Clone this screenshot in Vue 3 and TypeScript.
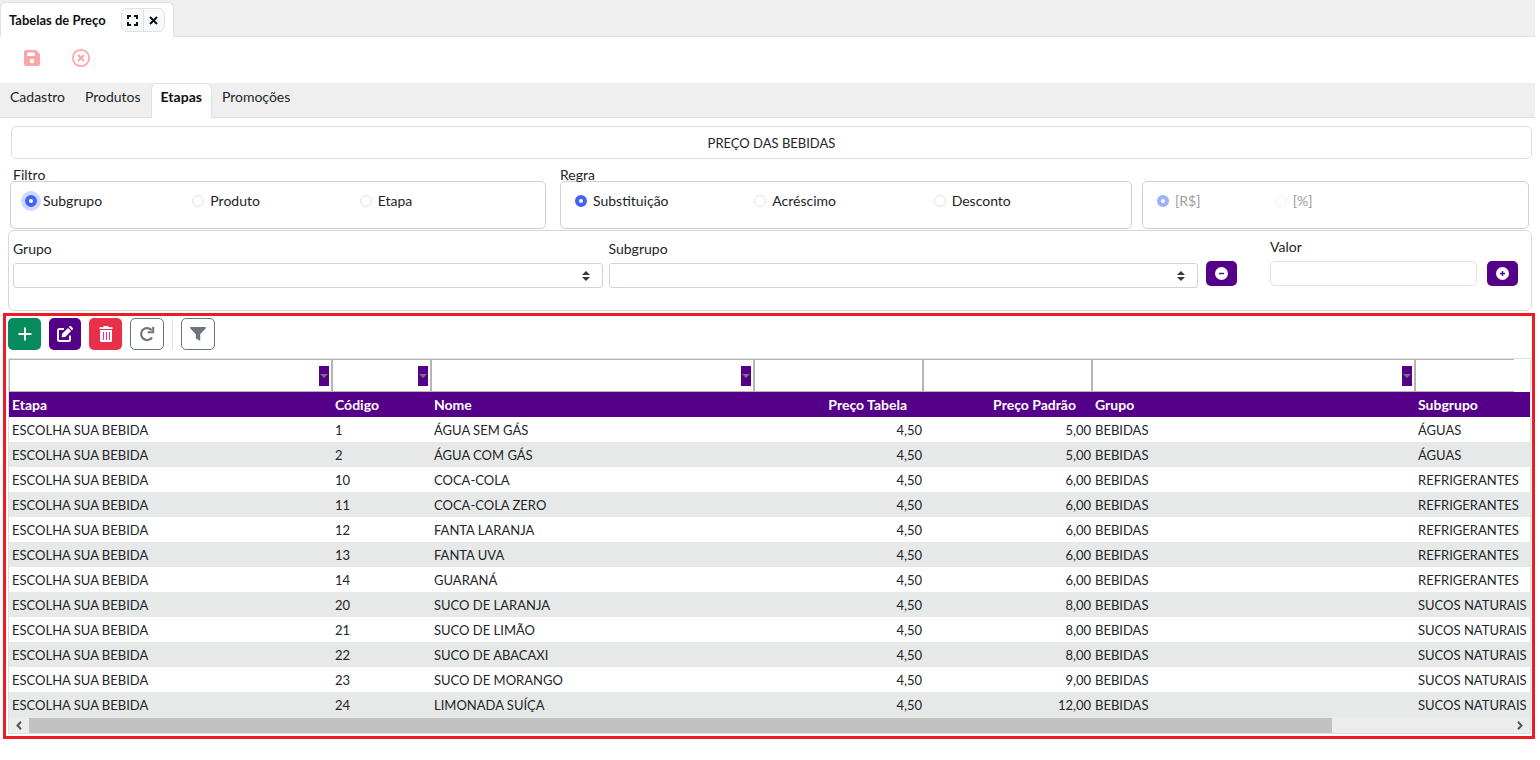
<script setup lang="ts">
import { ref } from 'vue'

interface Row {
  code: number
  name: string
  standard: string
  subgroup: string
}

interface Column {
  key: string
  label: string
  numeric?: boolean
  menu?: boolean
}

const tabs = ['Cadastro', 'Produtos', 'Etapas', 'Promoções']
const activeTab = ref('Etapas')
const title = ref('PREÇO DAS BEBIDAS')
const filterOptions = ['Subgrupo', 'Produto', 'Etapa']
const ruleOptions = ['Substituição', 'Acréscimo', 'Desconto']
const unitOptions = ['[R$]', '[%]']
const filter = ref('Subgrupo')
const rule = ref('Substituição')
const unit = ref('[R$]')
const value = ref('')

const columns: Column[] = [
  { key: 'stage', label: 'Etapa', menu: true },
  { key: 'code', label: 'Código', menu: true },
  { key: 'name', label: 'Nome', menu: true },
  { key: 'price', label: 'Preço Tabela', numeric: true },
  { key: 'standard', label: 'Preço Padrão', numeric: true },
  { key: 'group', label: 'Grupo', menu: true },
  { key: 'subgroup', label: 'Subgrupo' },
]

const rows: Row[] = [
  { code: 1, name: 'ÁGUA SEM GÁS', standard: '5,00', subgroup: 'ÁGUAS' },
  { code: 2, name: 'ÁGUA COM GÁS', standard: '5,00', subgroup: 'ÁGUAS' },
  { code: 10, name: 'COCA-COLA', standard: '6,00', subgroup: 'REFRIGERANTES' },
  { code: 11, name: 'COCA-COLA ZERO', standard: '6,00', subgroup: 'REFRIGERANTES' },
  { code: 12, name: 'FANTA LARANJA', standard: '6,00', subgroup: 'REFRIGERANTES' },
  { code: 13, name: 'FANTA UVA', standard: '6,00', subgroup: 'REFRIGERANTES' },
  { code: 14, name: 'GUARANÁ', standard: '6,00', subgroup: 'REFRIGERANTES' },
  { code: 20, name: 'SUCO DE LARANJA', standard: '8,00', subgroup: 'SUCOS NATURAIS' },
  { code: 21, name: 'SUCO DE LIMÃO', standard: '8,00', subgroup: 'SUCOS NATURAIS' },
  { code: 22, name: 'SUCO DE ABACAXI', standard: '8,00', subgroup: 'SUCOS NATURAIS' },
  { code: 23, name: 'SUCO DE MORANGO', standard: '9,00', subgroup: 'SUCOS NATURAIS' },
  { code: 24, name: 'LIMONADA SUÍÇA', standard: '12,00', subgroup: 'SUCOS NATURAIS' },
]
</script>

<template>
  <div class="page">
    <header class="window-bar">
      <div class="window-tab">
        <span class="window-title">Tabelas de Preço</span>
        <div class="window-actions">
          <button type="button" aria-label="Maximizar">
            <svg width="11" height="11" viewBox="0 0 11 11" fill="none" stroke="#111" stroke-width="2">
              <path d="M1 4V1h3M7 1h3v3M10 7v3H7M4 10H1V7" />
            </svg>
          </button>
          <button type="button" aria-label="Fechar">
            <svg width="9" height="9" viewBox="0 0 9 9" fill="none" stroke="#111" stroke-width="2">
              <path d="M1 1l7 7M8 1l-7 7" />
            </svg>
          </button>
        </div>
      </div>
    </header>

    <div class="record-actions">
      <button type="button" aria-label="Salvar" disabled>
        <svg width="18" height="18" viewBox="0 0 18 18" fill="#ffa5a5" fill-rule="evenodd">
          <path d="M3 1h10l4 4v10a2 2 0 0 1-2 2H3a2 2 0 0 1-2-2V3a2 2 0 0 1 2-2zM4 3.5h8V7H4zM9 9.8a2.3 2.3 0 1 0 0 4.6 2.3 2.3 0 0 0 0-4.6z" />
        </svg>
      </button>
      <button type="button" aria-label="Cancelar" disabled>
        <svg width="20" height="20" viewBox="0 0 20 20" fill="none" stroke="#ffa5a5">
          <circle cx="10" cy="10" r="8.2" stroke-width="1.7" />
          <path d="M7 7l6 6M13 7l-6 6" stroke-width="1.9" />
        </svg>
      </button>
    </div>

    <nav class="tabs">
      <button
        v-for="tab in tabs"
        :key="tab"
        type="button"
        class="tab"
        :class="{ active: tab === activeTab }"
        @click="activeTab = tab"
      >{{ tab }}</button>
    </nav>

    <main>
      <input v-model="title" class="title-box" aria-label="Descrição" readonly />

      <div class="options">
        <fieldset class="option-group first">
          <legend>Filtro</legend>
          <div class="option-box">
            <label v-for="option in filterOptions" :key="option" class="option">
              <input v-model="filter" type="radio" name="filter" :value="option" :class="{ focused: option === filter }" />
              {{ option }}
            </label>
          </div>
        </fieldset>
        <fieldset class="option-group second">
          <legend>Regra</legend>
          <div class="option-box">
            <label v-for="option in ruleOptions" :key="option" class="option">
              <input v-model="rule" type="radio" name="rule" :value="option" />
              {{ option }}
            </label>
          </div>
        </fieldset>
        <fieldset class="option-group third" aria-label="Unidade" disabled>
          <div class="option-box">
            <label v-for="option in unitOptions" :key="option" class="option">
              <input v-model="unit" type="radio" name="unit" :value="option" />
              {{ option }}
            </label>
          </div>
        </fieldset>
      </div>

      <section class="criteria">
        <div class="selectors">
          <div class="field">
            <label for="group">Grupo</label>
            <div class="select-wrap">
              <select id="group"><option value=""></option></select>
              <svg width="8" height="10" viewBox="0 0 8 10" fill="#343a40"><path d="M4 0l4 4H0zM4 10L0 6h8z" /></svg>
            </div>
          </div>
          <div class="field">
            <label for="subgroup">Subgrupo</label>
            <div class="select-wrap">
              <select id="subgroup"><option value=""></option></select>
              <svg width="8" height="10" viewBox="0 0 8 10" fill="#343a40"><path d="M4 0l4 4H0zM4 10L0 6h8z" /></svg>
            </div>
          </div>
        </div>
        <button type="button" class="round-action" aria-label="Remover">
          <svg width="13" height="13" viewBox="0 0 13 13"><circle cx="6.5" cy="6.5" r="6.5" fill="#fff" /><path d="M4 6.5h5" stroke="#550088" stroke-width="1.4" /></svg>
        </button>
        <div class="field amount">
          <label for="amount">Valor</label>
          <input id="amount" v-model="value" type="text" />
        </div>
        <button type="button" class="round-action" aria-label="Aplicar">
          <svg width="13" height="13" viewBox="0 0 13 13"><circle cx="6.5" cy="6.5" r="6.5" fill="#fff" /><path d="M4 6.5h5M6.5 4v5" stroke="#550088" stroke-width="1.4" /></svg>
        </button>
      </section>
    </main>

    <section class="steps">
      <div class="toolbar">
        <button type="button" class="tool add" aria-label="Adicionar">
          <svg width="14" height="14" viewBox="0 0 14 14" stroke="#fff" stroke-width="2"><path d="M7 0.5v13M0.5 7h13" /></svg>
        </button>
        <button type="button" class="tool edit" aria-label="Editar">
          <svg width="16" height="16" viewBox="0 0 16 16">
            <path d="M7 3H2.5A1.5 1.5 0 0 0 1 4.500v9A1.5 1.5 0 0 0 2.500 15h9a1.5 1.500 0 0 0 1.500-1.500V9.500" fill="none" stroke="#fff" stroke-width="2" />
            <path d="M11 1.900L14.100 5 8.200 10.900 4.700 11.300 5.100 7.800zM11.800 1.100l.8-.8a1.100 1.100 0 0 1 1.500 0l1.600 1.600a1.100 1.100 0 0 1 0 1.500l-.8.8z" fill="#fff" />
          </svg>
        </button>
        <button type="button" class="tool remove" aria-label="Excluir">
          <svg width="14" height="16" viewBox="0 0 14 16">
            <path d="M0.500 1.200h3.700L5 0h4l.8 1.200h3.700V3H0.500zM1 4h12v10.500a1.500 1.500 0 0 1-1.500 1.500h-9A1.500 1.500 0 0 1 1 14.500z" fill="#fff" />
            <path d="M4.500 6v8M7.500 6v8M10.500 6v8" stroke="#f02f8a" stroke-width="1" />
          </svg>
        </button>
        <button type="button" class="tool outline" aria-label="Atualizar">
          <svg width="16" height="16" viewBox="0 0 16 16">
            <path d="M12.700 4.200A6 6 0 1 0 13 11.500" fill="none" stroke="#6c757d" stroke-width="2.200" />
            <path d="M15.200 0.800V7.300H8.700V5.300H13.200V0.800z" fill="#6c757d" />
          </svg>
        </button>
        <span class="divider"></span>
        <button type="button" class="tool outline" aria-label="Filtrar">
          <svg width="16" height="14" viewBox="0 0 16 14" fill="#6c757d"><path d="M.8 0h14.400a.8.8 0 0 1 .6 1.300L10.200 7.200V14L5.800 11.300V7.200L.2 1.300A.8.8 0 0 1 .8 0z" /></svg>
        </button>
      </div>

      <div class="grid">
        <div class="grid-view">
          <table>
            <colgroup>
              <col v-for="column in columns" :key="column.key" :class="'col-' + column.key" />
            </colgroup>
            <thead>
              <tr class="filters">
                <td v-for="column in columns" :key="column.key">
                  <div class="filter" :class="{ open: column.key === 'subgroup' }">
                    <input type="text" :aria-label="'Filtrar ' + column.label" />
                    <button v-if="column.menu" type="button" :aria-label="'Opções de ' + column.label">
                      <svg width="8" height="4" viewBox="0 0 8 4" fill="#757575"><path d="M0 0h8L4 4z" /></svg>
                    </button>
                  </div>
                </td>
              </tr>
              <tr class="headings">
                <th v-for="column in columns" :key="column.key" scope="col" :class="{ numeric: column.numeric }">{{ column.label }}</th>
              </tr>
            </thead>
            <tbody>
              <tr v-for="row in rows" :key="row.code">
                <td>ESCOLHA SUA BEBIDA</td>
                <td>{{ row.code }}</td>
                <td>{{ row.name }}</td>
                <td class="numeric">4,50</td>
                <td class="numeric">{{ row.standard }}</td>
                <td>BEBIDAS</td>
                <td>{{ row.subgroup }}</td>
              </tr>
            </tbody>
          </table>
        </div>
        <div class="scrollbar">
          <button type="button" aria-label="Rolar para a esquerda">
            <svg width="6" height="9" viewBox="0 0 6 9" fill="none" stroke="#555" stroke-width="2"><path d="M5 .8L1.500 4.500 5 8.200" /></svg>
          </button>
          <div class="track"><div class="thumb"></div></div>
          <button type="button" aria-label="Rolar para a direita">
            <svg width="6" height="9" viewBox="0 0 6 9" fill="none" stroke="#555" stroke-width="2"><path d="M1 .8L4.500 4.500 1 8.200" /></svg>
          </button>
        </div>
      </div>
    </section>
  </div>
</template>

<style>
body {
  margin: 0;
  background: #fff;
}
</style>

<style scoped>
.page {
  padding-right: 5px;
  color: #212529;
  font: 14px/20px Lato, "Liberation Sans", sans-serif;
}
.page *,
.page *::before {
  box-sizing: border-box;
}
button,
input,
select {
  margin: 0;
  padding: 0;
  border: 0;
  background: none;
  color: inherit;
  font: inherit;
}
button {
  display: flex;
  align-items: center;
  justify-content: center;
}
svg {
  display: block;
  flex: none;
}
.window-bar {
  display: flex;
  height: 37px;
  padding-top: 2px;
  background: #efefef;
  box-shadow: inset 0 -1px #dee2e6;
}
.window-tab {
  display: flex;
  align-items: center;
  gap: 15px;
  padding: 0 8px;
  border: 1px solid #dee2e6;
  border-bottom: 0;
  border-radius: 6px 6px 0 0;
  background: #fff;
  color: #111;
  font-size: 13px;
  font-weight: 700;
}
.window-actions {
  display: flex;
  height: 24px;
  border: 1px solid #dee2e6;
  border-radius: 6px;
  background: #f8f9fa;
}
.window-actions button {
  width: 21px;
}
.window-actions button + button {
  border-left: 1px solid #dee2e6;
}
.record-actions {
  display: flex;
  align-items: center;
  gap: 30px;
  height: 46px;
  padding: 0 0 4px 23px;
}
.tabs {
  display: flex;
  height: 35px;
  background: #efefef;
  box-shadow: inset 0 -1px #dee2e6;
}
.tab {
  align-items: flex-start;
  padding: 3px 9px 0;
  border: 1px solid transparent;
  border-bottom: 0;
  border-radius: 6px 6px 0 0;
}
.tab.active {
  border-color: #dee2e6;
  background: #fff;
  color: #111;
  font-weight: 700;
}
main {
  padding: 8px 3px 0 8px;
}
.title-box {
  display: block;
  width: calc(100% - 3px);
  height: 33px;
  margin-left: 3px;
  border: 1px solid #dedede;
  border-radius: 5px;
  font-size: 13px;
  text-align: center;
}
.options {
  display: flex;
  align-items: flex-end;
  gap: 10px;
  padding: 8px 3px 0 2px;
}
.option-group {
  min-width: 0;
  margin: 0;
  padding: 0;
  border: 0;
}
.first {
  flex: 536;
  margin-right: 4px;
}
.second {
  flex: 572;
}
.third {
  flex: 387;
}
legend {
  height: 14px;
  padding: 0;
  line-height: 16px;
}
.first legend {
  padding-left: 3px;
}
.option-box {
  display: grid;
  grid-template-columns: repeat(3, 1fr);
  height: 48px;
  padding: 9px 18px 0 14px;
  border: 1px solid #d0d0d0;
  border-radius: 5px;
}
.option {
  display: flex;
  align-items: center;
  gap: 6px;
  height: 20px;
}
.option input {
  width: 12px;
  height: 12px;
  border: 1px solid #dee2e6;
  border-radius: 50%;
  background: #fff;
  appearance: none;
}
.option input:checked {
  border: 4px solid #4263fa;
}
.option input.focused {
  box-shadow: 0 0 0 4px #d0d8fe;
}
.third .option {
  color: #9b9d9f;
}
.third input {
  opacity: 0.5;
}
.criteria {
  display: flex;
  align-items: flex-start;
  margin-top: 1px;
  padding: 6px 13px 22px 4px;
  border: 1px solid #d8d8d8;
  border-radius: 6px;
}
.selectors {
  display: flex;
  flex: 1185;
  gap: 6px;
  padding-top: 2px;
}
.selectors .field {
  flex: 1;
}
.field label {
  display: block;
  margin-bottom: 4px;
}
.select-wrap {
  position: relative;
}
.select-wrap select {
  display: block;
  width: 100%;
  height: 25px;
  border: 1px solid #ced4da;
  border-radius: 3px;
  appearance: none;
}
.select-wrap svg {
  position: absolute;
  top: 8px;
  right: 13px;
  pointer-events: none;
}
.round-action {
  width: 31px;
  height: 25px;
  margin: 24px 0 0 8px;
  border-radius: 5px;
  background: #550088;
}
.amount {
  flex: 207;
  margin-left: 33px;
}
.amount + .round-action {
  margin-left: 10px;
}
.amount input {
  display: block;
  width: 100%;
  height: 25px;
  border: 1px solid #dee2e6;
  border-radius: 5px;
}
.steps {
  margin: 2px 0 0 3px;
  padding: 2px 1px 2px 2px;
  border: 3px solid #ed1c24;
}
.toolbar {
  display: flex;
  gap: 8px;
  margin-bottom: 8px;
}
.tool {
  width: 33px;
  height: 32px;
  border-radius: 5px;
}
.add {
  background: #078b5c;
}
.edit {
  width: 32px;
  background: #550088;
}
.remove {
  background: #e8304a;
}
.outline {
  width: 34px;
  border: 1px solid #6c757d;
}
.divider {
  width: 1px;
  background: #dee2e6;
}
.grid {
  border: 1px solid #dddfe1;
}
.grid-view {
  overflow: hidden;
}
table {
  width: 100%;
  border-collapse: collapse;
  table-layout: fixed;
  font-size: 13px;
}
.col-stage,
.col-name,
.col-group {
  width: 323px;
}
.col-code {
  width: 99px;
}
.col-price,
.col-standard {
  width: 169px;
}
.filters td {
  padding: 0;
}
.filter {
  display: flex;
  align-items: center;
  height: 33px;
  padding-right: 2px;
  border: 1px solid #b5b5b5;
}
.filter.open {
  width: 99px;
  border-right: 0;
}
.filter input {
  flex: 1;
  min-width: 0;
  height: 100%;
}
.filter button {
  width: 10px;
  height: 20px;
  background: #550088;
}
th,
tbody td {
  height: 25px;
  padding: 0 3px;
  text-align: left;
  white-space: nowrap;
}
th {
  background: #550088;
  color: #fff;
  font-size: 14px;
  font-weight: 700;
}
tbody tr:nth-child(even) {
  background: #e7e9e8;
}
.numeric {
  text-align: right;
}
th.numeric {
  padding-right: 16px;
}
td.numeric {
  padding-right: 1px;
}
.scrollbar {
  display: flex;
  height: 16px;
  background: #ececec;
}
.scrollbar button {
  width: 20px;
}
.track {
  flex: 1;
  padding-top: 1px;
}
.thumb {
  width: 88%;
  height: 100%;
  background: #c1c1c1;
}
</style>
